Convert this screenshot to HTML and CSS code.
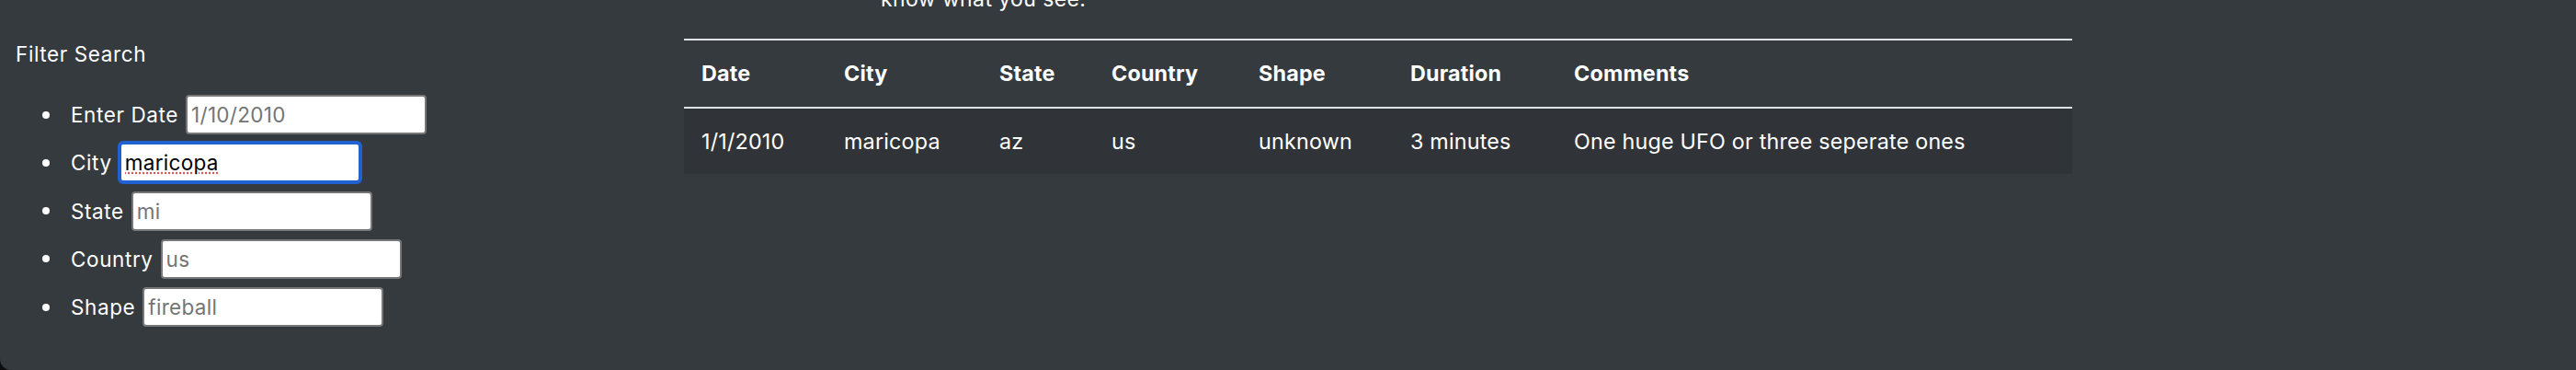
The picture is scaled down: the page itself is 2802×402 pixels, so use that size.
FILE: index.html
```html
<!DOCTYPE html>
<html lang="en">
<head>
<meta charset="utf-8">
<title>UFO Sightings</title>
<link rel="stylesheet" href="styles.css">
</head>
<body>
<div class="page">
  <aside class="sidebar">
    <h2 class="filter-title">Filter Search</h2>
    <ul class="filters">
      <li class="filter"><label class="filter-label" for="datetime">Enter Date</label><input class="filter-input" id="datetime" type="text" placeholder="1/10/2010"></li>
      <li class="filter"><label class="filter-label" for="city">City</label><input class="filter-input is-focused" id="city" type="text" value="maricopa"></li>
      <li class="filter"><label class="filter-label" for="state">State</label><input class="filter-input" id="state" type="text" placeholder="mi"></li>
      <li class="filter"><label class="filter-label" for="country">Country</label><input class="filter-input" id="country" type="text" placeholder="us"></li>
      <li class="filter"><label class="filter-label" for="shape">Shape</label><input class="filter-input" id="shape" type="text" placeholder="fireball"></li>
    </ul>
  </aside>
  <main class="content">
    <p class="intro">know what you see.</p>
    <table class="ufo-table">
      <thead>
        <tr>
          <th class="col-date">Date</th>
          <th class="col-city">City</th>
          <th class="col-state">State</th>
          <th class="col-country">Country</th>
          <th class="col-shape">Shape</th>
          <th class="col-duration">Duration</th>
          <th class="col-comments">Comments</th>
        </tr>
      </thead>
      <tbody>
        <tr>
          <td>1/1/2010</td>
          <td>maricopa</td>
          <td>az</td>
          <td>us</td>
          <td>unknown</td>
          <td>3 minutes</td>
          <td>One huge UFO or three seperate ones</td>
        </tr>
      </tbody>
    </table>
  </main>
</div>
</body>
</html>
```

FILE: styles.css
```css
html {
  background: #0d0e0f;
}

body {
  margin: 0;
  font-family: Inter, "Noto Sans", "Liberation Sans", sans-serif;
}

.page {
  display: flex;
  min-height: 402px;
  background: #353a3f;
  color: #ffffff;
  border-bottom-left-radius: 12px;
  overflow: hidden;
}

.sidebar {
  width: 744px;
  flex: none;
  box-sizing: border-box;
  padding-left: 17px;
}

.filter-title {
  margin: 45px 0 0;
  font-size: 22.5px;
  line-height: 27px;
  font-weight: 400;
  letter-spacing: 0.6px;
}

.filters {
  list-style: none;
  margin: 31px 0 0;
  padding: 0;
  display: flex;
  flex-direction: column;
  gap: 9.25px;
}

.filter {
  display: flex;
  align-items: center;
  height: 43px;
  font-size: 22.5px;
  letter-spacing: 0.6px;
}

.filter::before {
  content: "";
  width: 8px;
  height: 8px;
  border-radius: 50%;
  background: #ffffff;
  margin-left: 29px;
  margin-right: 23px;
  flex: none;
}

.filter-label {
  line-height: 27px;
}

.filter-input {
  box-sizing: border-box;
  width: 262px;
  height: 43px;
  margin-left: 8px;
  padding: 0 4px;
  border: 2px solid #777777;
  border-radius: 4px;
  background: #ffffff;
  color: #000000;
  font-family: Inter, "Noto Sans", "Liberation Sans", sans-serif;
  font-size: 22.5px;
  letter-spacing: 0.3px;
  outline: none;
}

.filter-input::placeholder {
  color: #757575;
}

.filter-input.is-focused {
  border-color: #2261d1;
  box-shadow: 0 0 0 2px #2261d1;
  text-decoration: underline dotted #e05555;
}

.content {
  width: 1510px;
  flex: none;
}

.intro {
  margin: -18px 0 26px 214px;
  font-size: 23px;
  line-height: 34px;
  letter-spacing: 0.4px;
}

.ufo-table {
  width: 1510px;
  table-layout: fixed;
  border-collapse: collapse;
  border-top: 2px solid #dee2e6;
  font-size: 23.3px;
}

.ufo-table th {
  height: 74px;
  padding: 0 0 2px 19px;
  text-align: left;
  font-weight: 700;
  letter-spacing: 0.2px;
  border-bottom: 2px solid #dee2e6;
  box-sizing: border-box;
}

.ufo-table td {
  height: 71px;
  padding: 0 0 0 19px;
  background: #303438;
  letter-spacing: 0.2px;
}

.col-date { width: 155px; }
.col-city { width: 169px; }
.col-state { width: 122px; }
.col-country { width: 160px; }
.col-shape { width: 165px; }
.col-duration { width: 178px; }
.col-comments { width: auto; }
```
